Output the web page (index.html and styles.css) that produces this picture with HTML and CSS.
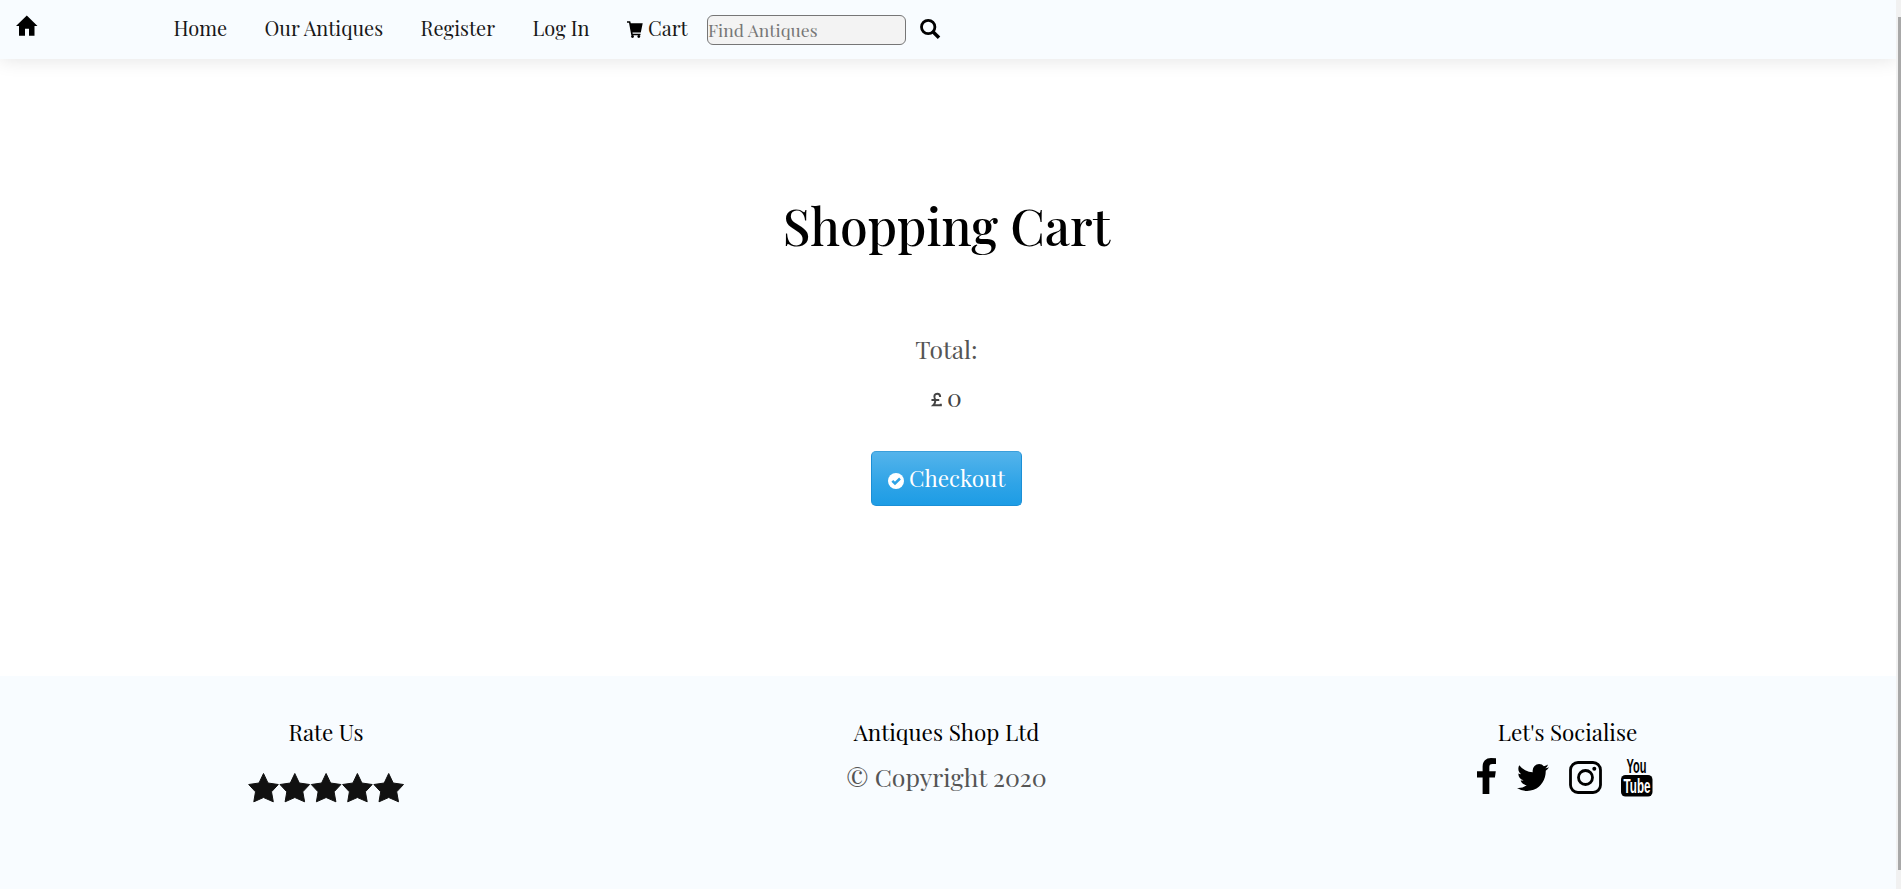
FILE: index.html
```html
<!DOCTYPE html>
<html lang="en">
<head>
<meta charset="utf-8">
<title>Shopping Cart</title>
<link rel="stylesheet" href="styles.css">
</head>
<body>
<div class="page">
<header class="navbar">
  <a class="brand"><svg width="22" height="21" viewBox="0 0 22 21"><path d="M10.800.500 21.500 11H18.500V20.800H13V13.700H9V20.800H3V11H0Z"/></svg></a>
  <nav class="links">
    <a class="home">Home</a><a class="antiques">Our Antiques</a><a class="register">Register</a><a class="login">Log In</a>
    <a class="cart"><svg width="16" height="17" viewBox="0 0 16 17"><path d="M0 0H3.200L3.800 2H15.700L13.800 10.800H5.500L5.700 11.800H13.500V13.300H4.300L2 1.500H0Z"/><circle cx="5.500" cy="14.500" r="1.400"/><circle cx="11.800" cy="14.500" r="1.400"/></svg>Cart</a>
  </nav>
  <input class="search" type="text" placeholder="Find Antiques">
  <svg class="find" width="21" height="21" viewBox="0 0 21 21"><circle cx="8.200" cy="8" r="6.700" fill="none" stroke="#000" stroke-width="2.800"/><path d="M12.700 12.500 19 18.800" stroke="#000" stroke-width="3.500"/></svg>
</header>
<main class="content">
  <h1>Shopping Cart</h1>
  <p class="total">Total:</p>
  <p class="amount"><svg width="11" height="16" viewBox="0 0 12 16"><path d="M10 4.800C10 2 8.500 1.200 6.800 1.200 4 1.200 3.200 3.500 4 5.800 5.200 9 4.800 11.500 2.500 13.800H10.700V12M.500 8H9" fill="none" stroke="#444" stroke-width="2.200"/></svg><span>0</span></p>
  <a class="checkout"><svg width="16" height="16" viewBox="0 0 16 16"><circle cx="8" cy="8" r="8" fill="#fff"/><path d="M4.300 7.800 7 10.500 12 5.500" fill="none" stroke="#2ea3e6" stroke-width="2.500"/></svg><span>Checkout</span></a>
</main>
<footer class="footer">
  <section>
    <h2>Rate Us</h2>
    <svg class="stars" width="157" height="30" viewBox="0 0 157 30"><defs><path id="star" d="M15.500.5 20 10 30.300 11.500 23.500 18.800 25.300 28.800 15.500 24.500 5.800 28.800 7.500 18.800.700 11.500 11 10Z" fill="#111" stroke="#111" stroke-linejoin="round"/></defs><use href="#star"/><use href="#star" x="31.300"/><use href="#star" x="62.600"/><use href="#star" x="93.900"/><use href="#star" x="125.200"/></svg>
  </section>
  <section>
    <h2 class="company">Antiques Shop Ltd</h2>
    <p class="copy">© Copyright 2020</p>
  </section>
  <section>
    <h2>Let's Socialise</h2>
    <div class="social">
      <svg class="fb" width="19" height="36" viewBox="479 0 864 1664" preserveAspectRatio="none"><path d="M1343 12v264h-157q-86 0-116 36t-30 108v189h293l-39 296h-254v759h-306v-759h-255v-296h255v-218q0-186 104-288.500t277-102.500q147 0 228 12z"/></svg>
      <svg class="tw" width="32" height="27" viewBox="108 256 1576 1280" preserveAspectRatio="none"><path d="M1684 408q-67 98-162 167 1 14 1 42 0 130-38 259.500t-115.500 248.500-184.500 210.500-258 146-323 54.500q-271 0-496-145 35 4 78 4 225 0 401-138-105-2-188-64.500t-114-159.500q33 5 61 5 43 0 85-11-112-23-185.500-111.500t-73.500-205.500v-4q68 38 146 41-66-44-105-115t-39-154q0-88 44-163 121 149 294.500 238.500t371.500 99.500q-8-38-8-74 0-134 94.500-228.500t228.500-94.500q140 0 236 102 109-21 205-78-37 115-142 178 93-10 186-50z"/></svg>
      <svg class="ig" width="33" height="33" viewBox="0 0 33 33"><g fill="none" stroke="#000" stroke-width="2.800"><rect x="1.500" y="1.500" width="30" height="30" rx="7.500"/><circle cx="16.500" cy="16.500" r="7"/></g><circle cx="25.300" cy="7.700" r="2"/></svg>
      <svg class="yt" width="32" height="39" viewBox="0 0 32 39"><rect x="0" y="17" width="31.500" height="21.500" rx="4.500"/><text x="5.500" y="14.500" class="you" textLength="20" lengthAdjust="spacingAndGlyphs">You</text><text x="2.500" y="35" class="tube" textLength="27" lengthAdjust="spacingAndGlyphs">Tube</text></svg>
    </div>
  </section>
</footer>
</div>
<div class="track"><div class="thumb"></div></div>
</body>
</html>
```
FILE: styles.css
```css
* { box-sizing: border-box; }
body { margin: 0; display: flex; height: 889px; overflow: hidden; background: #fff; font-family: "Playfair Display", "Liberation Serif", serif; color: #000; }
h1, h2, p { margin: 0; font-weight: 400; }
svg { flex: none; display: block; overflow: visible; }
.page { width: 1896px; height: 889px; display: flex; flex-direction: column; overflow: hidden; }
.navbar { height: 59px; flex: none; display: flex; background: #f8fcff; box-shadow: 0 0 20px rgba(0,0,0,.12); }
.brand { width: 173.500px; padding: 15px 0 0 16px; }
.links { display: flex; width: 533.500px; font-size: 20px; line-height: 55px; color: #181818; white-space: nowrap; transform: scaleY(1.06); transform-origin: 0 36px; }
.home { width: 91px; }
.antiques { width: 156px; }
.register { width: 112px; }
.login { width: 94.500px; }
.cart { display: flex; gap: 5px; }
.cart svg { margin-top: 22px; }
.search { width: 199px; height: 30px; margin-top: 15px; padding: 0 0 1px; border: 1px solid #767676; border-radius: 6px; background: #f3f3f3; font: 17.600px "Playfair Display", "Liberation Serif", serif; }
.search::placeholder { color: #777; }
.find { margin: 19px 0 0 14px; }
.content { flex: none; height: 617px; display: flex; flex-direction: column; align-items: center; padding-right: 3px; }
h1 { margin-top: 128px; font-size: 50px; font-weight: 500; line-height: 78px; }
.total { margin-top: 67px; font-size: 24.640px; line-height: 34px; color: #555; }
.amount { display: flex; gap: 5px; height: 34px; margin-top: 16px; font-size: 24.640px; line-height: 30px; color: #444; }
.amount svg { margin-top: 10px; }
.checkout { display: flex; width: 151px; height: 55px; margin-top: 35px; padding-left: 16px; gap: 5px; border: 1px solid #1b8fd6; border-top-color: #3a9fdb; border-radius: 5px; background: linear-gradient(#54b4eb, #2fa4e7 60%, #1d9ce5); color: #fff; font-size: 22.500px; line-height: 52px; }
.checkout svg { margin-top: 21px; }
.footer { flex: 1; display: grid; grid-template-columns: 652px 589px 653px; background: #f8fcff; }
.footer section { display: flex; flex-direction: column; align-items: center; padding-top: 41px; }
h2 { font-size: 22.400px; line-height: 30px; }
.company { font-size: 22.500px; }
.stars { margin-top: 26px; }
.copy { margin-top: 13px; font-size: 24.900px; line-height: 34px; color: #555; }
.social { display: flex; align-items: flex-start; margin: 11px 6px 0 0; }
.tw { margin: 6px 20px 0 21px; }
.ig { margin: 3px 19px 0 0; }
.you, .tube { font-family: "Liberation Sans", sans-serif; font-weight: 700; font-size: 20px; }
.tube { fill: #fff; font-size: 20px; }
.track { width: 5px; padding: 17px 0 19px 2px; background: #f1f1f1; }
.thumb { height: 853px; background: #a8a8a8; }
```
